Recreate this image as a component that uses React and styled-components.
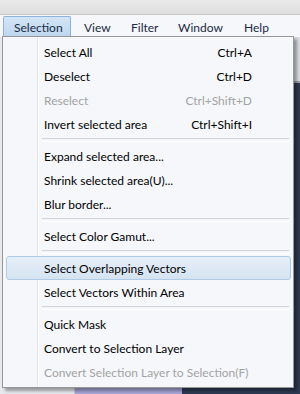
import React from "react";
import styled, { createGlobalStyle } from "styled-components";

const Global = createGlobalStyle`
  html, body { margin: 0; padding: 0; }
  body { width: 300px; height: 394px; overflow: hidden; background: #2d3a52; }
  * { box-sizing: border-box; }
`;

const Screen = styled.div`
  position: relative;
  width: 300px;
  height: 394px;
  display: flex;
  flex-direction: column;
  font-family: Lato, "Open Sans", sans-serif;
  font-size: 12px;
  overflow: hidden;
`;

const TitleStrip = styled.div`
  height: 15px;
  flex: none;
  background: linear-gradient(#e9e9e9, #dedede);
  border-bottom: 1px solid #c6c6c6;
`;

const MenuBar = styled.div`
  height: 22px;
  flex: none;
  display: flex;
  align-items: flex-start;
  padding: 1px 0 0 3px;
  background: #f5f7fb;
`;

const TopItem = styled.div`
  width: ${(p) => p.$w}px;
  margin-right: ${(p) => (p.$open ? 2 : 0)}px;
  height: 21px;
  padding-left: 10px;
  display: flex;
  align-items: center;
  color: #1b2a44;
  border: 1px solid ${(p) => (p.$open ? "#8fb2d8" : "transparent")};
  border-bottom: none;
  border-radius: 2px 2px 0 0;
  background: ${(p) =>
    p.$open ? "linear-gradient(#d3e5f6, #bcd6ee)" : "transparent"};
`;

const Workspace = styled.div`
  flex: 1;
  display: grid;
  grid-template-columns: 75px 107px 1fr;
`;

const LeftPanel = styled.div`
  background: #e6e9ee;
  border-right: 1px solid #c9ccd2;
`;

const MidPanel = styled.div`
  background: #a7a6d6;
`;

const RightPanel = styled.div`
  display: flex;
  flex-direction: column;
  background: #2d3a52;
`;

const RightHeader = styled.div`
  height: 46px;
  background: #d9dde3;
  border-bottom: 2px solid #9aa3b2;
`;

const Dropdown = styled.div`
  position: absolute;
  left: 2px;
  top: 36px;
  width: 292px;
  padding: 3px 2px 3px 3px;
  border: 1px solid #979797;
  box-shadow: 3px 3px 3px rgba(0, 0, 0, 0.35);
  background: linear-gradient(
    to right,
    #f5f7fb 34px,
    #e3e5e8 34px,
    #e3e5e8 35px,
    #ffffff 35px,
    #ffffff 36px,
    #f5f7fb 36px
  );
  background-origin: border-box;
  background-position: 1px 0;
  background-repeat: no-repeat;
  background-color: #f5f7fb;
  display: flex;
  flex-direction: column;
`;

const Item = styled.div`
  height: 24px;
  display: flex;
  align-items: center;
  justify-content: space-between;
  padding: 0 38px 0 37px;
  border: 1px solid ${(p) => (p.$active ? "#b2cbe4" : "transparent")};
  border-radius: 3px;
  background: ${(p) =>
    p.$active ? "linear-gradient(#e6eff9, #d5e3f1)" : "transparent"};
  color: ${(p) => (p.$disabled ? "#a3a3a3" : "#000")};
  white-space: nowrap;
`;

const Shortcut = styled.span`
  color: inherit;
`;

const Separator = styled.div`
  height: 8px;
  display: flex;
  align-items: center;
  padding: 0 2px 0 36px;
  &::before {
    content: "";
    flex: 1;
    height: 2px;
    border-top: 1px solid #d2d3d5;
    border-bottom: 1px solid #ffffff;
  }
`;

const topMenus = [
  { label: "Selection", w: 68, open: true },
  { label: "View", w: 47 },
  { label: "Filter", w: 47 },
  { label: "Window", w: 66 },
  { label: "Help", w: 50 },
];

const entries = [
  { t: "Select All", k: "Ctrl+A" },
  { t: "Deselect", k: "Ctrl+D" },
  { t: "Reselect", k: "Ctrl+Shift+D", d: true },
  { t: "Invert selected area", k: "Ctrl+Shift+I" },
  "sep",
  { t: "Expand selected area..." },
  { t: "Shrink selected area(U)..." },
  { t: "Blur border..." },
  "sep",
  { t: "Select Color Gamut..." },
  "sep",
  { t: "Select Overlapping Vectors", a: true },
  { t: "Select Vectors Within Area" },
  "sep",
  { t: "Quick Mask" },
  { t: "Convert to Selection Layer" },
  { t: "Convert Selection Layer to Selection(F)", d: true },
];

export default function App() {
  return (
    <>
      <Global />
      <Screen>
        <TitleStrip />
        <MenuBar>
          {topMenus.map((m) => (
            <TopItem key={m.label} $w={m.w} $open={m.open}>
              {m.label}
            </TopItem>
          ))}
        </MenuBar>
        <Workspace>
          <LeftPanel />
          <MidPanel />
          <RightPanel>
            <RightHeader />
          </RightPanel>
        </Workspace>
        <Dropdown>
          {entries.map((e, i) =>
            e === "sep" ? (
              <Separator key={i} />
            ) : (
              <Item key={i} $disabled={e.d} $active={e.a}>
                <span>{e.t}</span>
                {e.k && <Shortcut>{e.k}</Shortcut>}
              </Item>
            )
          )}
        </Dropdown>
      </Screen>
    </>
  );
}
